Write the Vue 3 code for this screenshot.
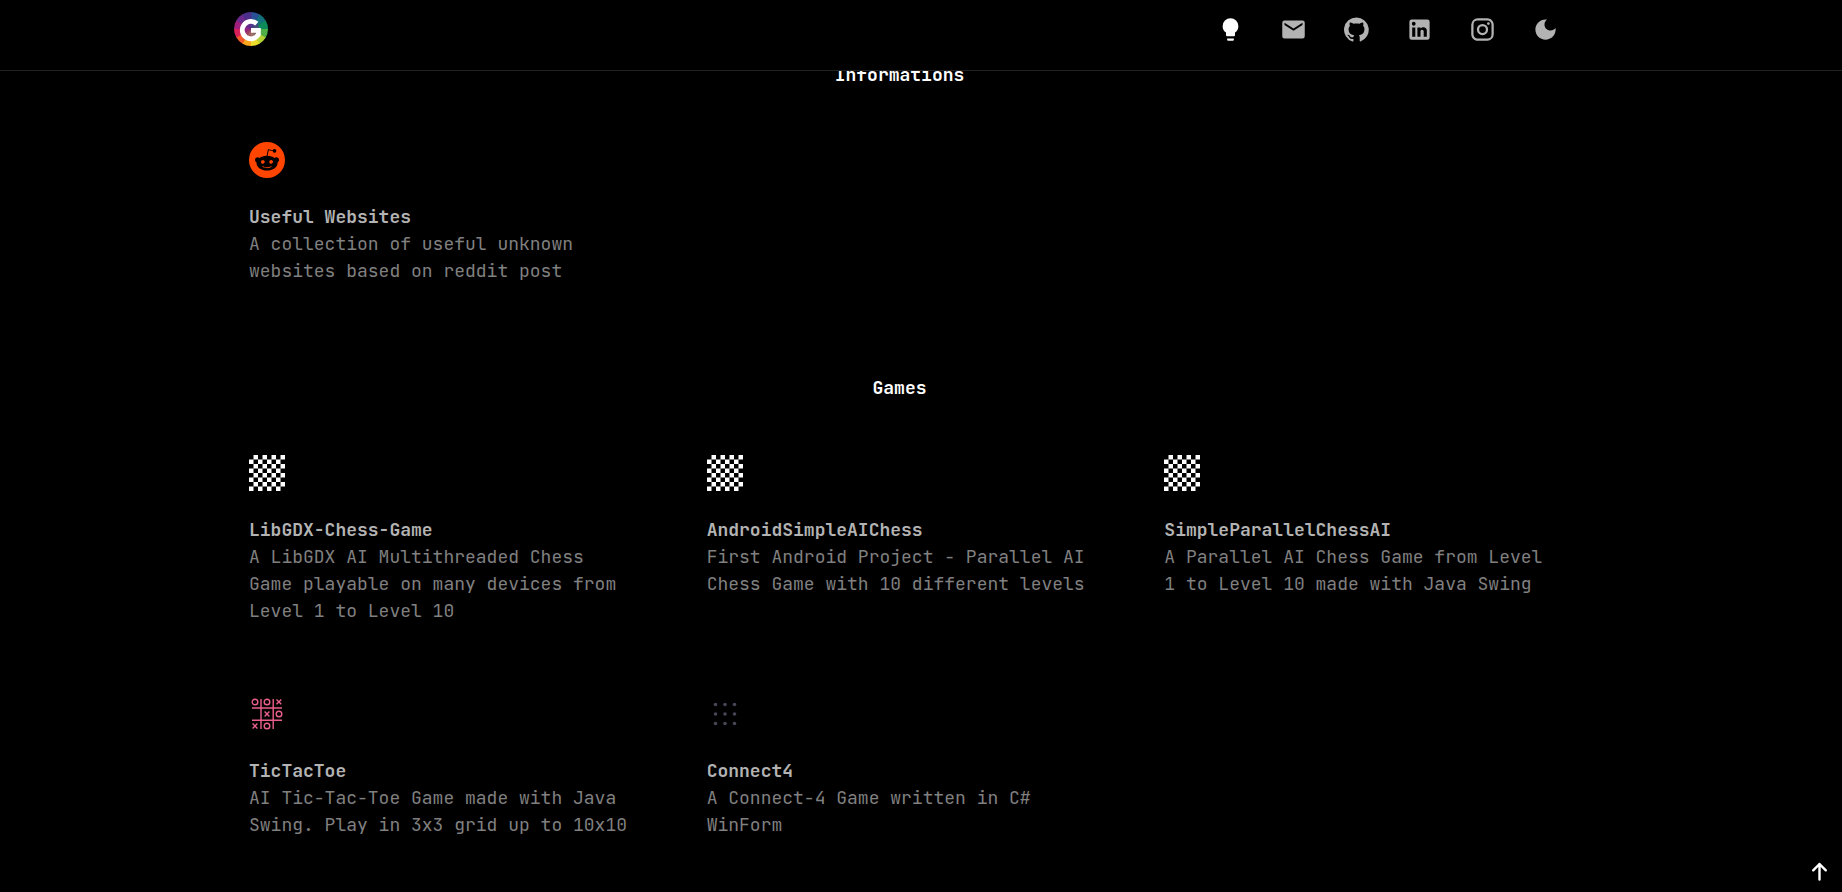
<script setup>
const navLinks = [
  {
    label: 'Projects',
    active: true,
    path: 'M12,2A7,7 0 0,0 5,9C5,11.38 6.19,13.47 8,14.74V17A1,1 0 0,0 9,18H15A1,1 0 0,0 16,17V14.74C17.81,13.47 19,11.38 19,9A7,7 0 0,0 12,2M9,21A1,1 0 0,0 10,22H14A1,1 0 0,0 15,21V20H9V21Z',
  },
  {
    label: 'Email',
    path: 'M20,4H4A2,2 0 0,0 2,6V18A2,2 0 0,0 4,20H20A2,2 0 0,0 22,18V6A2,2 0 0,0 20,4M20,8L12,13L4,8V6L12,11L20,6V8Z',
  },
  {
    label: 'GitHub',
    path: 'M12 1.27a11 11 0 00-3.48 21.46c.55.09.73-.28.73-.55v-1.84c-3.03.64-3.67-1.46-3.67-1.46-.55-1.29-1.28-1.65-1.28-1.65-.92-.65.1-.65.1-.65 1.1 0 1.73 1.1 1.73 1.1.92 1.65 2.57 1.2 3.21.92a2 2 0 01.64-1.47c-2.47-.27-5.04-1.19-5.04-5.5 0-1.1.46-2.1 1.2-2.84a3.76 3.76 0 010-2.93s.91-.28 3.11 1.1c1.8-.49 3.7-.49 5.5 0 2.1-1.38 3.02-1.1 3.02-1.1a3.76 3.76 0 01.1 2.83c.74.74 1.2 1.74 1.2 2.94 0 4.21-2.57 5.13-5.04 5.4.45.37.82.92.82 2.02v3.03c0 .27.1.64.73.55A11 11 0 0012 1.27',
  },
  {
    label: 'LinkedIn',
    path: 'M19 3A2 2 0 0 1 21 5V19A2 2 0 0 1 19 21H5A2 2 0 0 1 3 19V5A2 2 0 0 1 5 3H19M18.5 18.5V13.2A3.26 3.26 0 0 0 15.24 9.94C14.39 9.94 13.4 10.46 12.92 11.24V10.13H10.13V18.5H12.92V13.57C12.92 12.8 13.54 12.17 14.31 12.17A1.4 1.4 0 0 1 15.71 13.57V18.5H18.5M6.88 8.56A1.68 1.68 0 0 0 8.56 6.88C8.56 5.95 7.81 5.19 6.88 5.19A1.69 1.69 0 0 0 5.19 6.88C5.19 7.81 5.95 8.56 6.88 8.56M8.27 18.5V10.13H5.5V18.5H8.27Z',
  },
  {
    label: 'Instagram',
    path: 'M7.8,2H16.2C19.4,2 22,4.6 22,7.8V16.2A5.8,5.8 0 0,1 16.2,22H7.8C4.6,22 2,19.4 2,16.2V7.8A5.8,5.8 0 0,1 7.8,2M7.6,4A3.6,3.6 0 0,0 4,7.6V16.4C4,18.39 5.61,20 7.6,20H16.4A3.6,3.6 0 0,0 20,16.4V7.6C20,5.61 18.39,4 16.4,4H7.6M17.25,5.5A1.25,1.25 0 0,1 18.5,6.75A1.25,1.25 0 0,1 17.25,8A1.25,1.25 0 0,1 16,6.75A1.25,1.25 0 0,1 17.25,5.5M12,7A5,5 0 0,1 17,12A5,5 0 0,1 12,17A5,5 0 0,1 7,12A5,5 0 0,1 12,7M12,9A3,3 0 0,0 9,12A3,3 0 0,0 12,15A3,3 0 0,0 15,12A3,3 0 0,0 12,9Z',
  },
]

const moonPath =
  'M12 3c-4.97 0-9 4.03-9 9s4.03 9 9 9 9-4.03 9-9c0-.46-.04-.92-.1-1.36-.98 1.37-2.58 2.26-4.4 2.26-2.98 0-5.4-2.42-5.4-5.4 0-1.81.89-3.42 2.26-4.4-.44-.06-.9-.1-1.36-.1z'

const redditPath =
  'M12 0A12 12 0 0 0 0 12a12 12 0 0 0 12 12 12 12 0 0 0 12-12A12 12 0 0 0 12 0zm5.01 4.744c.688 0 1.25.561 1.25 1.249a1.25 1.25 0 0 1-2.498.056l-2.597-.547-.8 3.747c1.824.07 3.48.632 4.674 1.488.308-.309.73-.491 1.207-.491.968 0 1.754.786 1.754 1.754 0 .716-.435 1.333-1.01 1.614a3.111 3.111 0 0 1 .042.52c0 2.694-3.13 4.87-7.004 4.87-3.874 0-7.004-2.176-7.004-4.87 0-.183.015-.366.043-.534A1.748 1.748 0 0 1 4.028 12c0-.968.786-1.754 1.754-1.754.463 0 .898.196 1.207.49 1.207-.883 2.878-1.43 4.744-1.487l.885-4.182a.342.342 0 0 1 .14-.197.35.35 0 0 1 .238-.042l2.906.617a1.214 1.214 0 0 1 1.108-.701zM9.25 12C8.561 12 8 12.562 8 13.25c0 .687.561 1.248 1.25 1.248.687 0 1.248-.561 1.248-1.249 0-.688-.561-1.249-1.249-1.249zm5.5 0c-.687 0-1.248.561-1.248 1.25 0 .687.561 1.248 1.249 1.248.688 0 1.249-.561 1.249-1.249 0-.687-.562-1.249-1.25-1.249zm-5.466 3.99a.327.327 0 0 0-.231.094.33.33 0 0 0 0 .463c.842.842 2.484.913 2.961.913.477 0 2.105-.056 2.961-.913a.361.361 0 0 0 .029-.463.33.33 0 0 0-.464 0c-.547.533-1.684.73-2.512.73-.828 0-1.979-.196-2.512-.73a.326.326 0 0 0-.232-.095z'

// Colour wheel of the logo, clockwise from the top
const wheelColors = [
  '#2b4f96', '#14707c', '#0d8a5a', '#4fae45', '#b5d334', '#ecdc2c',
  '#fba61c', '#f0592a', '#d81f5a', '#a01f7c', '#6b2b8c', '#4b2f8a',
]
const wedges = wheelColors.map((color, i) => {
  const point = (n) => {
    const a = (n * Math.PI) / 6
    return `${(17 + 17 * Math.sin(a)).toFixed(2)} ${(17 - 17 * Math.cos(a)).toFixed(2)}`
  }
  return { color, d: `M17 17L${point(i)}A17 17 0 0 1 ${point(i + 1.05)}Z` }
})

// White squares of an 8x8 board, one unit per square
let boardPath = ''
for (let row = 0; row < 8; row++) {
  for (let col = 0; col < 8; col++) {
    if ((row + col) % 2) boardPath += `M${col} ${row}h1v1h-1z`
  }
}

const dots = [8.5, 18, 27.5].flatMap((y) => [8.5, 18, 27.5].map((x) => ({ x, y })))

const sections = [
  {
    title: 'Informations',
    items: [
      { icon: 'reddit', name: 'Useful Websites', text: 'A collection of useful unknown websites based on reddit post' },
    ],
  },
  {
    title: 'Games',
    items: [
      { icon: 'chess', name: 'LibGDX-Chess-Game', text: 'A LibGDX AI Multithreaded Chess Game playable on many devices from Level 1 to Level 10' },
      { icon: 'chess', name: 'AndroidSimpleAIChess', text: 'First Android Project - Parallel AI Chess Game with 10 different levels' },
      { icon: 'chess', name: 'SimpleParallelChessAI', text: 'A Parallel AI Chess Game from Level 1 to Level 10 made with Java Swing' },
      { icon: 'tictactoe', name: 'TicTacToe', text: 'AI Tic-Tac-Toe Game made with Java Swing. Play in 3x3 grid up to 10x10' },
      { icon: 'connect4', name: 'Connect4', text: 'A Connect-4 Game written in C# WinForm' },
    ],
  },
]

const scrollTop = () => window.scrollTo({ top: 0, behavior: 'smooth' })
</script>

<template>
  <div class="page">
    <header class="header">
      <div class="bar">
        <a class="logo" href="#" aria-label="Home">
          <svg viewBox="0 0 34 34" aria-hidden="true">
            <path v-for="w in wedges" :key="w.color" :d="w.d" :fill="w.color" />
            <circle cx="17" cy="17" r="8" fill="#6a2c91" opacity="0.6" />
            <path
              d="M22.8 11.6A8.7 8.7 0 1 0 24.4 22.6V18.4H17"
              fill="none"
              stroke="#fff"
              stroke-width="4.8"
            />
          </svg>
        </a>
        <nav class="nav" aria-label="Main">
          <a
            v-for="link in navLinks"
            :key="link.label"
            href="#"
            class="nav-item"
            :class="{ active: link.active }"
            :aria-label="link.label"
          >
            <svg viewBox="0 0 24 24" aria-hidden="true"><path :d="link.path" /></svg>
          </a>
          <button type="button" class="nav-item" aria-label="Toggle theme">
            <svg viewBox="0 0 24 24" aria-hidden="true"><path :d="moonPath" /></svg>
          </button>
        </nav>
      </div>
    </header>

    <main class="content">
      <section v-for="section in sections" :key="section.title" class="section">
        <h2 class="heading">{{ section.title }}</h2>
        <div class="grid">
          <a v-for="item in section.items" :key="item.name" class="card" href="#">
            <svg v-if="item.icon === 'reddit'" class="icon" viewBox="0 0 24 24" aria-hidden="true">
              <path :d="redditPath" fill="#ff4500" />
            </svg>
            <svg v-else-if="item.icon === 'chess'" class="icon" viewBox="0 0 8 8" aria-hidden="true">
              <path :d="boardPath" fill="#fff" />
            </svg>
            <svg
              v-else-if="item.icon === 'tictactoe'"
              class="icon"
              viewBox="0 0 36 36"
              fill="none"
              stroke="#ea5f8b"
              stroke-width="1.4"
              aria-hidden="true"
            >
              <path d="M12 3V33M24.2 3V33M3 12H33M3 24.2H33" />
              <circle cx="6" cy="6" r="2.8" />
              <circle cx="18" cy="6" r="2.8" />
              <circle cx="30" cy="18" r="2.8" />
              <circle cx="18" cy="30" r="2.8" />
              <path d="M27.5 3.5l4.8 4.8m0-4.8l-4.8 4.8M15.6 15.6l4.8 4.8m0-4.8l-4.8 4.8M3.6 27.6l4.8 4.8m0-4.8l-4.8 4.8" />
            </svg>
            <svg v-else class="icon" viewBox="0 0 36 36" aria-hidden="true">
              <circle v-for="d in dots" :key="`${d.x}-${d.y}`" :cx="d.x" :cy="d.y" r="1.8" fill="#464657" />
            </svg>
            <h3 class="name">{{ item.name }}</h3>
            <p class="text">{{ item.text }}</p>
          </a>
        </div>
      </section>
    </main>

    <button type="button" class="to-top" aria-label="Back to top" @click="scrollTop">
      <svg viewBox="0 0 27 27" aria-hidden="true">
        <path
          d="M13.5 21.5V6M7.2 12.3L13.5 6L19.8 12.3"
          fill="none"
          stroke="#fff"
          stroke-width="2.4"
          stroke-linecap="round"
          stroke-linejoin="round"
        />
      </svg>
    </button>
  </div>
</template>

<style>
body {
  margin: 0;
  background: #000;
}
</style>

<style scoped>
.page {
  min-height: 100vh;
  background: #000;
  color: #fff;
  font-family: 'JetBrains Mono', 'DejaVu Sans Mono', monospace;
  font-size: 18px;
  line-height: 27px;
}

.header {
  position: fixed;
  inset: 0 0 auto;
  z-index: 1;
  box-sizing: border-box;
  padding-right: 43px;
  background: #000;
  border-bottom: 1px solid #222;
}

.bar {
  display: flex;
  align-items: center;
  justify-content: space-between;
  box-sizing: border-box;
  max-width: 1331px;
  margin: 0 auto;
  padding: 12px 6px 24px 0;
}

.logo {
  display: block;
  width: 34px;
  height: 34px;
}

.logo svg,
.nav-item svg,
.to-top svg {
  display: block;
  width: 100%;
  height: 100%;
}

.nav {
  display: flex;
  gap: 36px;
}

.nav-item {
  width: 27px;
  height: 27px;
  padding: 0;
  border: 0;
  background: none;
  color: #b3b3b3;
  cursor: pointer;
}

.nav-item.active {
  color: #fff;
}

.nav-item svg {
  fill: currentColor;
}

.content {
  display: flex;
  flex-direction: column;
  gap: 90px;
  padding: 61px 58px 36px 15px;
}

.section {
  width: 100%;
  max-width: 1301px;
  margin: 0 auto;
}

.heading {
  margin: 0 0 54px;
  font-size: 18px;
  font-weight: 700;
  text-align: center;
}

.grid {
  display: grid;
  grid-template-columns: repeat(3, minmax(0, 1fr));
  gap: 72px;
}

.card {
  color: #808080;
  text-decoration: none;
}

.icon {
  display: block;
  width: 36px;
  height: 36px;
  margin-bottom: 25px;
}

.name {
  margin: 0;
  color: #b3b3b3;
  font-size: 18px;
  font-weight: 600;
}

.text {
  margin: 0;
}

.to-top {
  position: fixed;
  right: 9px;
  bottom: 7px;
  width: 27px;
  height: 27px;
  padding: 0;
  border: 0;
  background: none;
  cursor: pointer;
}

@media (max-width: 900px) {
  .bar {
    padding-left: 15px;
  }

  .grid {
    grid-template-columns: minmax(0, 1fr);
  }
}
</style>
